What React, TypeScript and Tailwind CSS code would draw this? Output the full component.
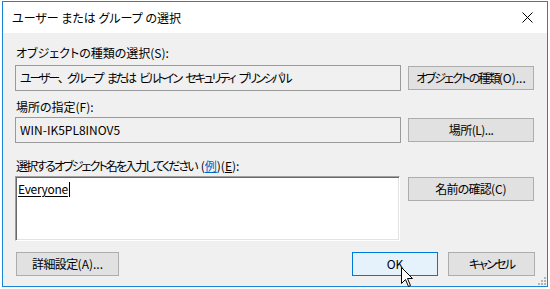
import React from 'react';

const font = "font-['Noto_Sans_CJK_JP','Noto_Sans',sans-serif] [font-feature-settings:'palt']";

const WinButton: React.FC<{ children: React.ReactNode; className?: string; primary?: boolean }> = ({
  children,
  className = '',
  primary,
}) => (
  <div
    className={`h-[24px] flex items-center justify-center text-[12px] text-black border whitespace-nowrap ${
      primary ? 'bg-[#e5f1fb] border-[#0078d7]' : 'bg-[#e1e1e1] border-[#adadad]'
    } ${className}`}
  >
    {children}
  </div>
);

export default function App() {
  return (
    <div className={`w-[550px] h-[289px] bg-white pl-[2px] pt-[1px] ${font}`}>
      <div className="relative w-[546px] h-[286px] border border-[#1883d7] bg-[#f0f0f0] flex flex-col">
        {/* title bar */}
        <div className="h-[31px] bg-white flex items-center justify-between pl-[9px] pr-[9px]">
          <span className="text-[12px] text-black leading-none">ユーザー または グループ の選択</span>
          <svg width="11" height="11" viewBox="0 0 11 11" className="mr-[5px]">
            <path d="M0.5 0.5 L10.5 10.5 M10.5 0.5 L0.5 10.5" stroke="#000" strokeWidth="1" />
          </svg>
        </div>

        {/* content */}
        <div className="flex-1 flex flex-col px-[12px] pt-[12px] text-[12px] text-black">
          <div className="h-[16px] leading-[16px] pl-[1px] whitespace-nowrap">オブジェクトの種類の選択(S):</div>
          <div className="mt-[4px] flex items-center gap-[7px]">
            <div className="w-[386px] h-[26px] border border-[#9a9a9a] bg-[#f0f0f0] flex items-center pl-[4px] whitespace-nowrap">
              <span className="tracking-[-2.2px] [word-spacing:4px]">
                ユーザー<span className="[font-feature-settings:normal] tracking-[-3px]">、</span>グループ または ビルトイン セキュリティ プリンシパル
              </span>
            </div>
            <WinButton className="w-[126px]">
              <span className="tracking-[-1.8px]">オブジェクトの種類</span>
              <span>(O)...</span>
            </WinButton>
          </div>

          <div className="mt-[8px] h-[16px] leading-[16px] pl-[1px]">場所の指定(F):</div>
          <div className="mt-[2px] flex items-center gap-[7px]">
            <div className="w-[386px] h-[26px] border border-[#9a9a9a] bg-[#f0f0f0] flex items-center pl-[4px]">
              WIN-IK5PL8INOV5
            </div>
            <WinButton className="w-[126px]">
              <span className="tracking-[-0.5px]">場所(L)...</span>
            </WinButton>
          </div>

          <div className="mt-[15px] h-[16px] leading-[16px] pl-[1px] whitespace-nowrap">
            <span className="tracking-[-1.9px]">選択するオブジェクト名を入力してください</span>
            <span className="ml-[4px]">
              (<span className="text-[#0066cc] underline">例</span>)(<span className="underline">E</span>):
            </span>
          </div>
          <div className="mt-[2px] flex items-start gap-[8px]">
            <div className="w-[385px] h-[65px] bg-white border border-t-[#a0a0a0] border-l-[#a0a0a0] border-r-[#ffffff] border-b-[#ffffff] shadow-[inset_1px_1px_0_#696969,inset_-1px_-1px_0_#e3e3e3] pl-[2px] pt-[4px]">
              <div className="flex items-center">
                <span className="underline underline-offset-[2px] leading-[16px] tracking-[-0.3px]">Everyone</span>
                <span className="w-[1px] h-[15px] bg-black ml-[1px]" />
              </div>
            </div>
            <WinButton className="w-[126px] mt-[1px]">
              <span className="tracking-[-0.8px]">名前の確認</span>
              <span>(C)</span>
            </WinButton>
          </div>

          <div className="mt-[11px] flex items-center justify-between pl-[1px]">
            <WinButton className="w-[103px]">
              <span className="tracking-[-0.6px]">詳細設定</span>
              <span>(A)...</span>
            </WinButton>
            <div className="flex items-center gap-[10px]">
              <WinButton primary className="w-[86px]">
                OK
              </WinButton>
              <WinButton className="w-[87px]">
                <span className="tracking-[-1.8px]">キャンセル</span>
              </WinButton>
            </div>
          </div>
        </div>

        {/* size grip */}
        <svg width="8" height="8" viewBox="0 0 8 8" className="absolute right-[1px] bottom-[1px]">
          <g fill="#b4b4b4">
            <rect x="6" y="0" width="2" height="2" />
            <rect x="3" y="3" width="2" height="2" />
            <rect x="6" y="3" width="2" height="2" />
            <rect x="0" y="6" width="2" height="2" />
            <rect x="3" y="6" width="2" height="2" />
            <rect x="6" y="6" width="2" height="2" />
          </g>
        </svg>

        {/* mouse pointer */}
        <svg width="13" height="20" viewBox="0 0 13 20" className="absolute left-[398px] top-[265px]">
          <path
            d="M0.5 0.5 L0.5 16.5 L4.5 12.5 L7.5 19.5 L9.5 18.5 L6.5 11.5 L11.5 11.5 Z"
            fill="#fff"
            stroke="#000"
            strokeWidth="1"
            strokeLinejoin="miter"
          />
        </svg>
      </div>
    </div>
  );
}
